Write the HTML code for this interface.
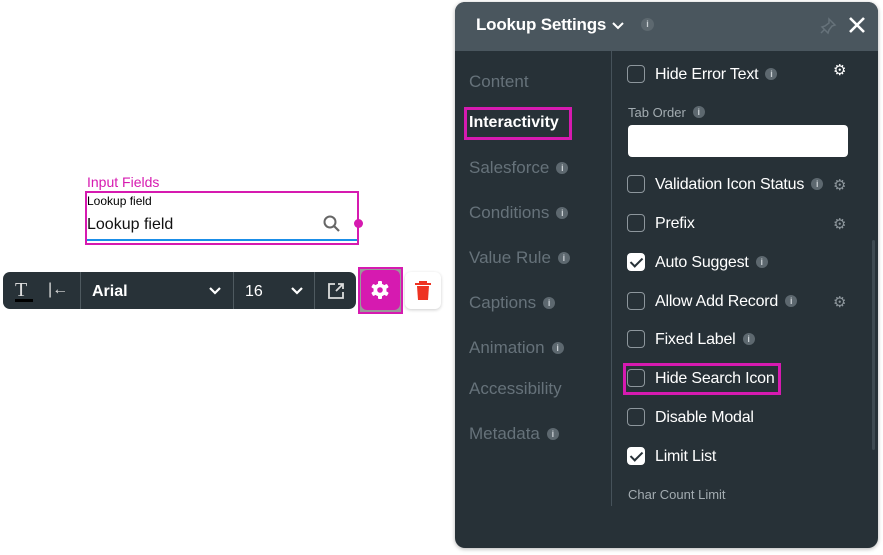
<!DOCTYPE html>
<html><head><style>
*{margin:0;padding:0;box-sizing:border-box}
body{width:883px;height:555px;background:#fff;position:relative;overflow:hidden;font-family:"Liberation Sans",sans-serif}
.a{position:absolute}
.panel{left:455px;top:2px;width:423px;height:546px;background:#273137;border-radius:10px;overflow:hidden;box-shadow:0 1px 4px rgba(0,0,0,.3)}
.hdr{left:0;top:0;width:423px;height:49px;background:#4a565e}
.nav{color:#66727a;font-size:17px;left:14px}
.info{display:inline-block;width:12px;height:12px;border-radius:50%;background:#5d686f;color:#c9cfd3;font-size:9px;text-align:center;line-height:12px;font-weight:bold;vertical-align:2px;margin-left:7px}
.row{left:172px;color:#fff;font-size:16px;height:20px;line-height:20px;letter-spacing:-0.2px}
.cb{display:inline-block;width:18px;height:18px;border:1.5px solid #8d969c;border-radius:4px;vertical-align:-4px;margin-right:10px;position:relative}
.cb.on{background:#fff;border-color:#fff}
.cb.on:after{content:"";position:absolute;left:5px;top:1px;width:5px;height:10px;border:solid #273137;border-width:0 2px 2px 0;transform:rotate(45deg)}
.gear{color:#8d969c;font-size:15px}
</style></head><body>
<div class="a" style="left:87px;top:174px;color:#d61ab0;font-size:14px">Input Fields</div>
<div class="a" style="left:85px;top:191px;width:274px;height:54px;border:2px solid #d61ab0"></div>
<div class="a" style="left:87px;top:194px;font-size:12px;color:#000">Lookup field</div>
<div class="a" style="left:87px;top:216px;font-size:16px;color:#111">Lookup field</div>
<svg class="a" style="left:322px;top:214px" width="20" height="20" viewBox="0 0 20 20"><circle cx="8" cy="8" r="5.5" fill="none" stroke="#666" stroke-width="2"/><path d="M12 12l5 5" stroke="#666" stroke-width="2.2"/></svg>
<div class="a" style="left:87px;top:239px;width:270px;height:2px;background:#1a8ee8"></div>
<div class="a" style="left:354px;top:219px;width:9px;height:9px;border-radius:50%;background:#d61ab0"></div>
<div class="a" style="left:3px;top:272px;width:353px;height:37px;background:#283238;border-radius:7px"></div>
<div class="a" style="left:15px;top:279px;color:#ddd;font-family:'Liberation Serif';font-size:20px">T</div>
<div class="a" style="left:15px;top:299px;width:18px;height:3px;background:#000"></div>
<div class="a" style="left:48px;top:281px;color:#ddd;font-size:16px">|←</div>
<div class="a" style="left:80px;top:272px;width:1px;height:37px;background:#4f5a60"></div>
<div class="a" style="left:92px;top:283px;color:#fff;font-size:16px;font-weight:bold">Arial</div>
<svg class="a" style="left:208px;top:286px" width="14" height="10"><path d="M2 2l5 5 5-5" stroke="#fff" stroke-width="2.2" fill="none"/></svg>
<div class="a" style="left:233px;top:272px;width:1px;height:37px;background:#4f5a60"></div>
<div class="a" style="left:245px;top:283px;color:#fff;font-size:16px">16</div>
<svg class="a" style="left:290px;top:286px" width="14" height="10"><path d="M2 2l5 5 5-5" stroke="#fff" stroke-width="2.2" fill="none"/></svg>
<div class="a" style="left:314px;top:272px;width:1px;height:37px;background:#4f5a60"></div>
<svg class="a" style="left:327px;top:282px" width="18" height="18"><path d="M8 2H2v14h14v-6M11 2h5v5M16 2l-7 7" stroke="#ddd" stroke-width="1.8" fill="none"/></svg>
<div class="a" style="left:358px;top:267px;width:45px;height:47px;border:2px solid #d61ab0;background:#999"></div>
<div class="a" style="left:361px;top:270px;width:39px;height:40px;background:#d61ab0;border-radius:6px"></div>
<svg class="a" style="left:370px;top:280px" width="20" height="20" viewBox="0 0 20 20"><g fill="#fff"><circle cx="10" cy="10" r="6.5"/><rect x="8" y="1" width="4" height="18" rx="1"/><rect x="8" y="1" width="4" height="18" rx="1" transform="rotate(60 10 10)"/><rect x="8" y="1" width="4" height="18" rx="1" transform="rotate(120 10 10)"/></g><circle cx="10" cy="10" r="2.8" fill="#d61ab0"/></svg>
<div class="a" style="left:405px;top:272px;width:36px;height:37px;background:#fff;border-radius:6px;box-shadow:0 1px 3px rgba(0,0,0,.2)"></div>
<svg class="a" style="left:414px;top:280px" width="18" height="21"><path d="M1 4h16M6 4V2h6v2" stroke="#e32" stroke-width="2" fill="none"/><path d="M3 6h12l-1 14H4z" fill="#e32"/></svg>

<div class="a panel">
<div class="a hdr"></div>
<div class="a" style="left:21px;top:13px;color:#fff;font-size:17px;font-weight:bold;letter-spacing:-0.2px">Lookup Settings</div>
<svg class="a" style="left:157px;top:19px" width="12" height="10"><path d="M1 2l5 5 5-5" stroke="#fff" stroke-width="2" fill="none"/></svg>
<span class="a info" style="left:186px;top:16px;margin:0;width:13px;height:13px">i</span>
<svg class="a" style="left:364px;top:15px" width="18" height="18"><path d="M10 2l6 6-3 1-3 4-1 3-6-6 3-1 4-3zM5 13l-3 3" stroke="#66727a" stroke-width="1.5" fill="none"/></svg>
<svg class="a" style="left:393px;top:14px" width="18" height="18"><path d="M2 2l14 14M16 2L2 16" stroke="#fff" stroke-width="2.6"/></svg>
<div class="a" style="left:156px;top:49px;width:1px;height:455px;background:#46525a"></div>
<div class="a" style="left:417px;top:238px;width:3px;height:210px;background:#3f4a51;border-radius:2px"></div>
<div class="a nav" style="top:70px">Content</div>
<div class="a" style="left:9px;top:105px;width:108px;height:33px;border:3px solid #d61ab0"></div>
<div class="a" style="left:14px;top:112px;color:#fff;font-size:16px;font-weight:bold">Interactivity</div>
<div class="a nav" style="top:156px">Salesforce<span class="info">i</span></div>
<div class="a nav" style="top:201px">Conditions<span class="info">i</span></div>
<div class="a nav" style="top:246px">Value Rule<span class="info">i</span></div>
<div class="a nav" style="top:291px">Captions<span class="info">i</span></div>
<div class="a nav" style="top:336px">Animation<span class="info">i</span></div>
<div class="a nav" style="top:377px">Accessibility</div>
<div class="a nav" style="top:422px">Metadata<span class="info">i</span></div>

<div class="a row" style="top:63px"><span class="cb"></span>Hide Error Text<span class="info">i</span></div>
<div class="a gear" style="left:378px;top:59px;color:#fff">⚙</div>
<div class="a" style="left:173px;top:103px;color:#a3acb1;font-size:13px">Tab Order<span class="info">i</span></div>
<div class="a" style="left:173px;top:123px;width:220px;height:32px;background:#fff;border-radius:4px"></div>
<div class="a row" style="top:173px"><span class="cb"></span>Validation Icon Status<span class="info">i</span></div>
<div class="a gear" style="left:378px;top:174px">⚙</div>
<div class="a row" style="top:212px"><span class="cb"></span>Prefix</div>
<div class="a gear" style="left:378px;top:213px">⚙</div>
<div class="a row" style="top:251px"><span class="cb on"></span>Auto Suggest<span class="info">i</span></div>
<div class="a row" style="top:290px"><span class="cb"></span>Allow Add Record<span class="info">i</span></div>
<div class="a gear" style="left:378px;top:291px">⚙</div>
<div class="a row" style="top:328px"><span class="cb"></span>Fixed Label<span class="info">i</span></div>
<div class="a" style="left:168px;top:361px;width:158px;height:32px;border:3px solid #d61ab0"></div>
<div class="a row" style="top:367px"><span class="cb"></span>Hide Search Icon</div>
<div class="a row" style="top:406px"><span class="cb"></span>Disable Modal</div>
<div class="a row" style="top:445px"><span class="cb on"></span>Limit List</div>
<div class="a" style="left:173px;top:485px;color:#a3acb1;font-size:13px">Char Count Limit</div>
</div>
</body></html>
